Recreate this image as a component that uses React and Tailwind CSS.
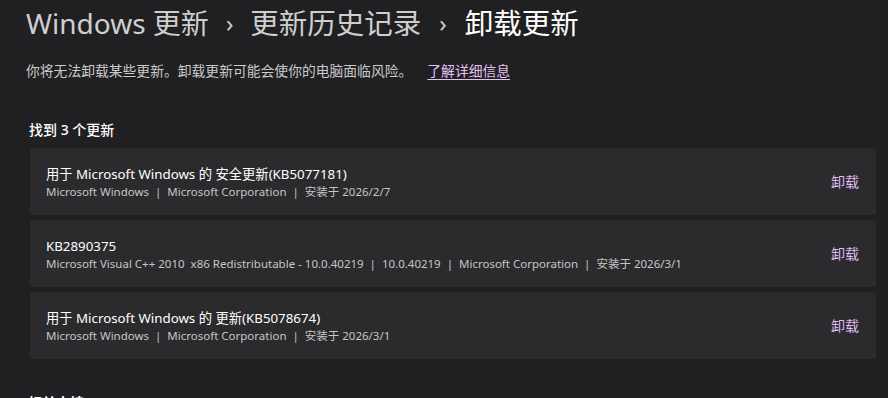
import React from "react";

const updates = [
    {
        name: "用于 Microsoft Windows 的 安全更新(KB5077181)",
        info: "Microsoft Windows  |  Microsoft Corporation  |  安装于 2026/2/7",
    },
    {
        name: "KB2890375",
        info: "Microsoft Visual C++ 2010  x86 Redistributable - 10.0.40219  |  10.0.40219  |  Microsoft Corporation  |  安装于 2026/3/1",
    },
    {
        name: "用于 Microsoft Windows 的 更新(KB5078674)",
        info: "Microsoft Windows  |  Microsoft Corporation  |  安装于 2026/3/1",
    },
];

function App() {
    return (
        <div
            className="w-[888px] h-[398px] overflow-hidden bg-[#202023] text-white"
            style={{ fontFamily: '"Noto Sans", "Noto Sans CJK SC", sans-serif' }}
        >
            {/* breadcrumb header */}
            <div className="flex items-center pl-[26px] pt-[3px] h-[42px] text-[28px] leading-[38px]">
                <span className="text-[#cfcfcf]">Windows 更新</span>
                <span className="text-[#cfcfcf] mx-[17px] text-[24px]">›</span>
                <span className="text-[#cfcfcf] text-[28.5px]">更新历史记录</span>
                <span className="text-[#cfcfcf] mx-[18px] text-[24px]">›</span>
                <span className="text-white text-[28.5px]">卸载更新</span>
            </div>

            <div className="flex items-center pl-[26px] mt-[19px] h-[20px] text-[13.8px]">
                <span className="text-[#cbcbcb]">你将无法卸载某些更新。卸载更新可能会使你的电脑面临风险。</span>
                <span className="ml-[15px] text-[#e3c3f3] underline underline-offset-[3px] cursor-pointer">了解详细信息</span>
            </div>

            <p className="pl-[29px] mt-[39px] h-[20px] text-[14px] font-medium leading-[20px]">找到 3 个更新</p>

            <div className="flex flex-col gap-[5px] pl-[30px] pr-[12px] mt-[8px]">
                {updates.map((u, index) => (
                    <div
                        key={index}
                        className="flex items-center justify-between h-[67px] rounded-[4px] bg-[#2b2b2e] pl-[16px] pr-[17px]"
                    >
                        <div className="flex flex-col">
                            <span className="text-[13.3px] leading-[20px] text-white">{u.name}</span>
                            <span className="text-[11.5px] leading-[16px] text-[#c6c6c6] whitespace-pre">{u.info}</span>
                        </div>
                        <span className="text-[14px] text-[#dcbcee] cursor-pointer">卸载</span>
                    </div>
                ))}
            </div>

            <p className="pl-[28px] mt-[33px] text-[14px] font-semibold">相关支持</p>
        </div>
    );
}

export default App;
